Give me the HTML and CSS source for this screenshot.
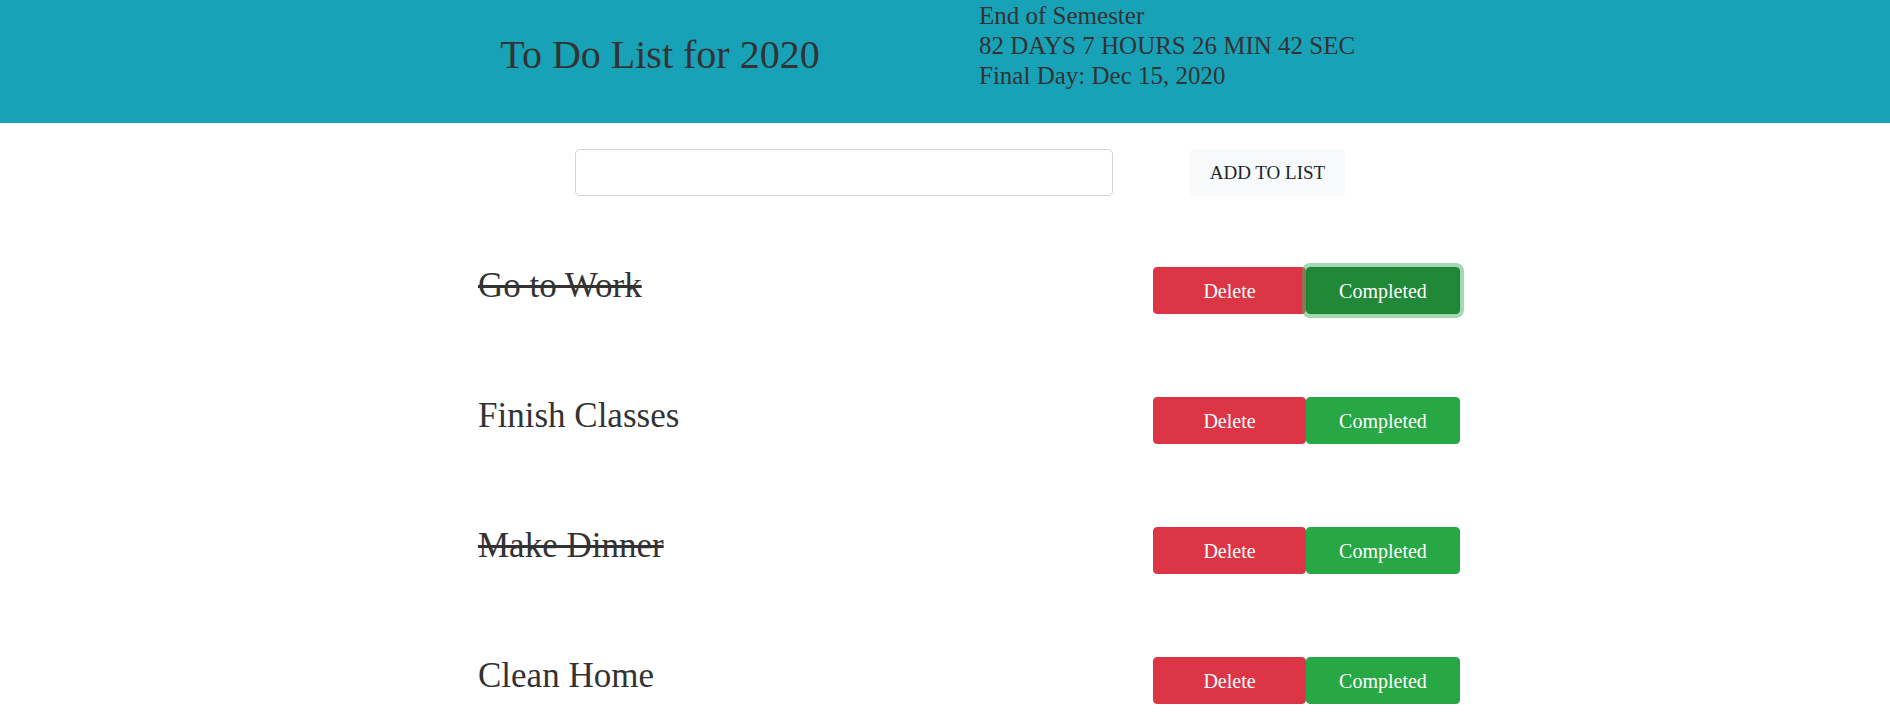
FILE: index.html
```html
<!DOCTYPE html>
<html lang="en">
<head>
<meta charset="utf-8">
<title>To Do List for 2020</title>
<link rel="stylesheet" href="styles.css">
</head>
<body>
<header class="app-header">
  <div class="header-inner">
    <div class="title-col">
      <h1 class="title">To Do List for 2020</h1>
    </div>
    <div class="timer">
      <div>End of Semester</div>
      <div>82 DAYS 7 HOURS 26 MIN 42 SEC</div>
      <div>Final Day: Dec 15, 2020</div>
    </div>
  </div>
</header>
<main class="page">
  <form class="add-row">
    <input class="add-input" type="text">
    <button class="btn btn-light" type="button">ADD TO LIST</button>
  </form>
  <ul class="todo-list">
    <li class="todo">
      <span class="todo-text done">Go to Work</span>
      <div class="actions">
        <button class="btn btn-danger" type="button">Delete</button>
        <button class="btn btn-success focused" type="button">Completed</button>
      </div>
    </li>
    <li class="todo">
      <span class="todo-text">Finish Classes</span>
      <div class="actions">
        <button class="btn btn-danger" type="button">Delete</button>
        <button class="btn btn-success" type="button">Completed</button>
      </div>
    </li>
    <li class="todo">
      <span class="todo-text done">Make Dinner</span>
      <div class="actions">
        <button class="btn btn-danger" type="button">Delete</button>
        <button class="btn btn-success" type="button">Completed</button>
      </div>
    </li>
    <li class="todo">
      <span class="todo-text">Clean Home</span>
      <div class="actions">
        <button class="btn btn-danger" type="button">Delete</button>
        <button class="btn btn-success" type="button">Completed</button>
      </div>
    </li>
  </ul>
</main>
</body>
</html>
```

FILE: styles.css
```css
* { box-sizing: border-box; }
body {
  margin: 0;
  font-family: "Liberation Serif", "Times New Roman", serif;
  color: #333;
  background: #fff;
  overflow: hidden;
}
.app-header {
  background: #17a2b8;
  height: 123px;
}
.header-inner {
  width: 1140px;
  margin: 0 auto;
  display: grid;
  grid-template-columns: 1fr 1fr;
}
.title-col {
  padding: 0 15px;
  text-align: center;
}
.title {
  margin: 31px 0 0;
  font-size: 40px;
  font-weight: normal;
  line-height: 1.2;
  color: #333;
}
.timer {
  padding: 1px 15px 0 34px;
  font-size: 25px;
  line-height: 30px;
  color: #333;
}
.page {
  width: 1140px;
  margin: 0 auto;
}
.add-row {
  display: flex;
  gap: 77px;
  margin: 26px 0 0 200px;
}
.add-input {
  width: 538px;
  height: 47px;
  border: 1px solid #ced4da;
  border-radius: 5px;
  background: #fff;
  font: inherit;
  font-size: 20px;
  padding: 8px 16px;
}
.btn {
  font-family: "Liberation Serif", "Times New Roman", serif;
  font-size: 20px;
  line-height: 30px;
  height: 47px;
  padding: 8px 0;
  border: 1px solid transparent;
  border-radius: 4px;
  white-space: nowrap;
  text-align: center;
  cursor: pointer;
}
.btn-light {
  width: 155px;
  background: #f8f9fa;
  border-color: #f8f9fa;
  color: #212529;
  font-size: 19px;
}
.todo-list {
  list-style: none;
  margin: 71px 0 0 103px;
  padding: 0;
  width: 982px;
}
.todo {
  display: flex;
  align-items: center;
  justify-content: space-between;
  height: 47px;
  margin-bottom: 83px;
}
.todo-text {
  font-size: 35px;
  line-height: 1.2;
  margin-bottom: 10px;
  color: #333;
}
.todo-text.done {
  text-decoration: line-through;
}
.actions {
  display: flex;
}
.btn-danger,
.btn-success {
  width: 154px;
  color: #fff;
}
.btn-danger {
  width: 153px;
  background: #dc3545;
  border-color: #dc3545;
}
.btn-success {
  background: #28a745;
  border-color: #28a745;
}
.btn-success.focused {
  background: #218838;
  border-color: #1e7e34;
  box-shadow: 0 0 0 4px rgba(72, 180, 97, 0.5);
}
```
